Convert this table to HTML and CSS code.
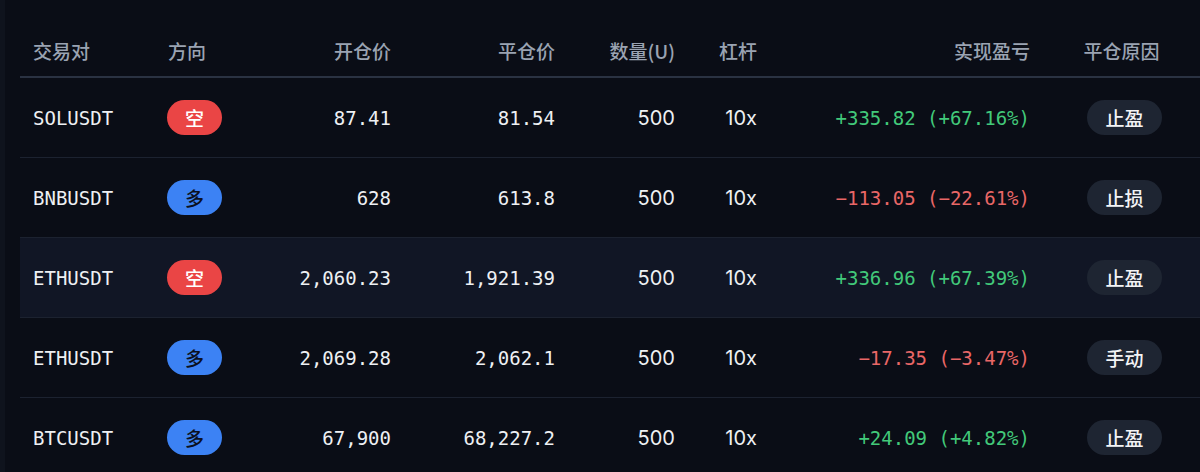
FILE: index.html
```html
<!DOCTYPE html>
<html lang="zh-CN">
<head>
<meta charset="utf-8">
<title>平仓记录</title>
<link rel="stylesheet" href="styles.css">
</head>
<body>
<div class="page">
  <div class="table">
    <div class="row head">
      <div class="c c1">交易对</div>
      <div class="c c2">方向</div>
      <div class="c c3">开仓价</div>
      <div class="c c4">平仓价</div>
      <div class="c c5">数量(U)</div>
      <div class="c c6">杠杆</div>
      <div class="c c7">实现盈亏</div>
      <div class="c c8">平仓原因</div>
    </div>
    <div class="row">
      <div class="c c1 mono">SOLUSDT</div>
      <div class="c c2"><span class="side short">空</span></div>
      <div class="c c3 mono">87.41</div>
      <div class="c c4 mono">81.54</div>
      <div class="c c5 sans">500</div>
      <div class="c c6 sans">10x</div>
      <div class="c c7 mono up">+335.82 (+67.16%)</div>
      <div class="c c8"><span class="reason">止盈</span></div>
    </div>
    <div class="row">
      <div class="c c1 mono">BNBUSDT</div>
      <div class="c c2"><span class="side long">多</span></div>
      <div class="c c3 mono">628</div>
      <div class="c c4 mono">613.8</div>
      <div class="c c5 sans">500</div>
      <div class="c c6 sans">10x</div>
      <div class="c c7 mono down">−113.05 (−22.61%)</div>
      <div class="c c8"><span class="reason">止损</span></div>
    </div>
    <div class="row hover">
      <div class="c c1 mono">ETHUSDT</div>
      <div class="c c2"><span class="side short">空</span></div>
      <div class="c c3 mono">2,060.23</div>
      <div class="c c4 mono">1,921.39</div>
      <div class="c c5 sans">500</div>
      <div class="c c6 sans">10x</div>
      <div class="c c7 mono up">+336.96 (+67.39%)</div>
      <div class="c c8"><span class="reason">止盈</span></div>
    </div>
    <div class="row">
      <div class="c c1 mono">ETHUSDT</div>
      <div class="c c2"><span class="side long">多</span></div>
      <div class="c c3 mono">2,069.28</div>
      <div class="c c4 mono">2,062.1</div>
      <div class="c c5 sans">500</div>
      <div class="c c6 sans">10x</div>
      <div class="c c7 mono down">−17.35 (−3.47%)</div>
      <div class="c c8"><span class="reason">手动</span></div>
    </div>
    <div class="row">
      <div class="c c1 mono">BTCUSDT</div>
      <div class="c c2"><span class="side long">多</span></div>
      <div class="c c3 mono">67,900</div>
      <div class="c c4 mono">68,227.2</div>
      <div class="c c5 sans">500</div>
      <div class="c c6 sans">10x</div>
      <div class="c c7 mono up">+24.09 (+4.82%)</div>
      <div class="c c8"><span class="reason">止盈</span></div>
    </div>
  </div>
</div>
</body>
</html>
```

FILE: styles.css
```css
html, body {
  margin: 0;
  padding: 0;
  background: #0a0d16;
  height: 100%;
  overflow: hidden;
}

.page {
  padding-left: 15px;
  border-left: 5px solid #0f131d;
  box-sizing: border-box;
  font-family: "Noto Sans CJK SC", "Noto Sans", sans-serif;
  color: #e6e8ec;
}

.table {
  width: 1180px;
}

.row {
  display: grid;
  grid-template-columns: 135px 93px 156px 164px 120px 82px 273px 157px;
  height: 79px;
  align-items: center;
  border-bottom: 1px solid #1c2230;
}

.row.head {
  height: 76px;
  align-items: end;
  border-bottom: 2px solid #2a3242;
}

.row.hover {
  background: #111625;
}

.c {
  padding: 0 13px;
  white-space: nowrap;
  font-size: 19px;
}

.head .c {
  color: #9aa3b2;
  font-weight: 500;
  padding-bottom: 12px;
  font-size: 19px;
}

.c1, .c2 { text-align: left; }
.c3, .c4, .c5, .c6, .c7 { text-align: right; }
.c8 { text-align: center; }

.row:not(.head) .c8 {
  padding: 0 10px 0 16px;
}

.mono {
  font-family: "DejaVu Sans Mono", monospace;
  font-size: 19px;
  color: #eef0f3;
}

.sans {
  font-family: Inter, "Noto Sans", sans-serif;
  font-size: 20px;
  color: #eef0f3;
}

.up { color: #42c97a; }
.down { color: #e96767; }

.side {
  display: inline-flex;
  align-items: center;
  justify-content: center;
  width: 55px;
  height: 35px;
  margin-left: -1px;
  border-radius: 18px;
  font-size: 19px;
  font-weight: 500;
}

.side.short {
  background: #ea4545;
  color: #ffffff;
}

.side.long {
  background: #3c82f4;
  color: #0b1020;
}

.reason {
  display: inline-flex;
  align-items: center;
  justify-content: center;
  width: 75px;
  height: 35px;
  border-radius: 18px;
  background: #1e2532;
  color: #f3f4f6;
  font-size: 19px;
  font-weight: 500;
}
```
